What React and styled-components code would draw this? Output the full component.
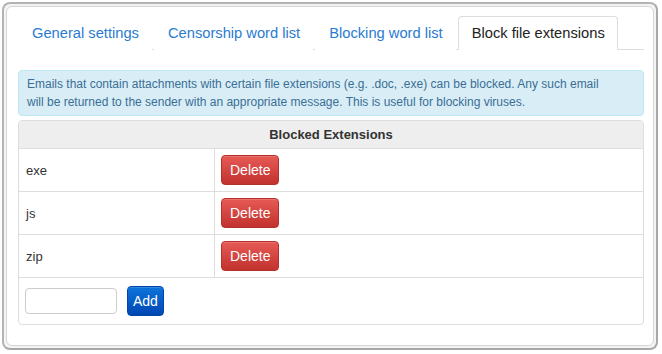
import styled, { createGlobalStyle } from 'styled-components';

const GlobalStyle = createGlobalStyle`
  html, body {
    margin: 0;
    padding: 0;
    background: #fff;
  }
  body {
    font-family: "Liberation Sans", Arial, sans-serif;
    color: #333;
  }
  * { box-sizing: border-box; }
`;

const Frame = styled.div`
  margin: 2px;
  width: 656px;
  height: 348px;
  border: 2px solid #b4b4b4;
  border-right-color: #a8a8a8;
  border-bottom-color: #a8a8a8;
  border-radius: 8px;
  padding: 2px;
  background: #f4f4f4;
`;

const Panel = styled.div`
  height: 100%;
  background: #fff;
  border: 1px solid #d6d6d6;
  border-radius: 6px;
  padding: 9px 9px 0 11px;
`;

const Tabs = styled.ul`
  display: flex;
  list-style: none;
  margin: 0;
  padding: 0;
  border-bottom: 1px solid #ddd;
`;

const Tab = styled.li`
  margin-right: 2px;
  margin-bottom: -1px;
  padding: 6px 12px 6px 13px;
  font-size: 14.7px;
  line-height: 20px;
  border: 1px solid ${(p) => (p.$active ? '#ddd' : 'transparent')};
  border-bottom-color: ${(p) => (p.$active ? '#fff' : 'transparent')};
  border-radius: 4px 4px 0 0;
  background: #fff;
  color: ${(p) => (p.$active ? '#222' : '#2a7bd0')};
  cursor: pointer;
`;

const Alert = styled.div`
  margin-top: 20px;
  padding: 4px 30px 4px 8px;
  font-size: 12px;
  line-height: 18px;
  color: #3a6f94;
  background: #d9edf7;
  border: 1px solid #bce8f1;
  border-radius: 4px;
`;

const Table = styled.div`
  margin-top: 4px;
  border: 1px solid #ddd;
  border-radius: 4px;
  overflow: hidden;
`;

const HeadRow = styled.div`
  height: 28px;
  display: flex;
  align-items: center;
  justify-content: center;
  background: #eee;
  border-bottom: 1px solid #ddd;
  font-size: 13px;
  font-weight: bold;
  color: #333;
`;

const Row = styled.div`
  display: grid;
  grid-template-columns: 195px 1fr;
  border-bottom: 1px solid #ddd;
`;

const Cell = styled.div`
  padding: 6px;
  display: flex;
  align-items: center;
  font-size: 13px;
  color: #333;
  &:first-child {
    padding-left: 7px;
  }
  & + & {
    border-left: 1px solid #ddd;
  }
`;

const AddRow = styled.div`
  display: flex;
  align-items: center;
  gap: 10px;
  padding: 8px 6px;
`;

const Button = styled.button`
  height: 30px;
  padding: ${(p) => (p.$variant === 'danger' ? '0 8px' : '0 5px')};
  border-radius: 4px;
  font-family: "Liberation Sans", Arial, sans-serif;
  font-size: 14px;
  color: #fff;
  border: 1px solid ${(p) => (p.$variant === 'danger' ? '#b52f2b' : '#0045a8')};
  background: ${(p) =>
    p.$variant === 'danger'
      ? 'linear-gradient(#e65a56, #c2322e)'
      : 'linear-gradient(#0c74dc, #0047b3)'};
  box-shadow: inset 0 1px 0 rgba(255, 255, 255, 0.15);
  cursor: pointer;
`;

const Input = styled.input`
  width: 92px;
  height: 26px;
  border: 1px solid #ccc;
  border-radius: 4px;
  padding: 2px 6px;
  font-size: 13px;
`;

const tabs = ['General settings', 'Censorship word list', 'Blocking word list', 'Block file extensions'];
const extensions = ['exe', 'js', 'zip'];

export default function App() {
  return (
    <>
      <GlobalStyle />
      <Frame>
        <Panel>
          <Tabs>
            {tabs.map((t, i) => (
              <Tab key={t} $active={i === tabs.length - 1}>
                {t}
              </Tab>
            ))}
          </Tabs>
          <Alert>
            Emails that contain attachments with certain file extensions (e.g. .doc, .exe) can be blocked. Any such email
            will be returned to the sender with an appropriate message. This is useful for blocking viruses.
          </Alert>
          <Table>
            <HeadRow>Blocked Extensions</HeadRow>
            {extensions.map((ext) => (
              <Row key={ext}>
                <Cell>{ext}</Cell>
                <Cell>
                  <Button $variant="danger">Delete</Button>
                </Cell>
              </Row>
            ))}
            <AddRow>
              <Input type="text" />
              <Button $variant="primary">Add</Button>
            </AddRow>
          </Table>
        </Panel>
      </Frame>
    </>
  );
}
